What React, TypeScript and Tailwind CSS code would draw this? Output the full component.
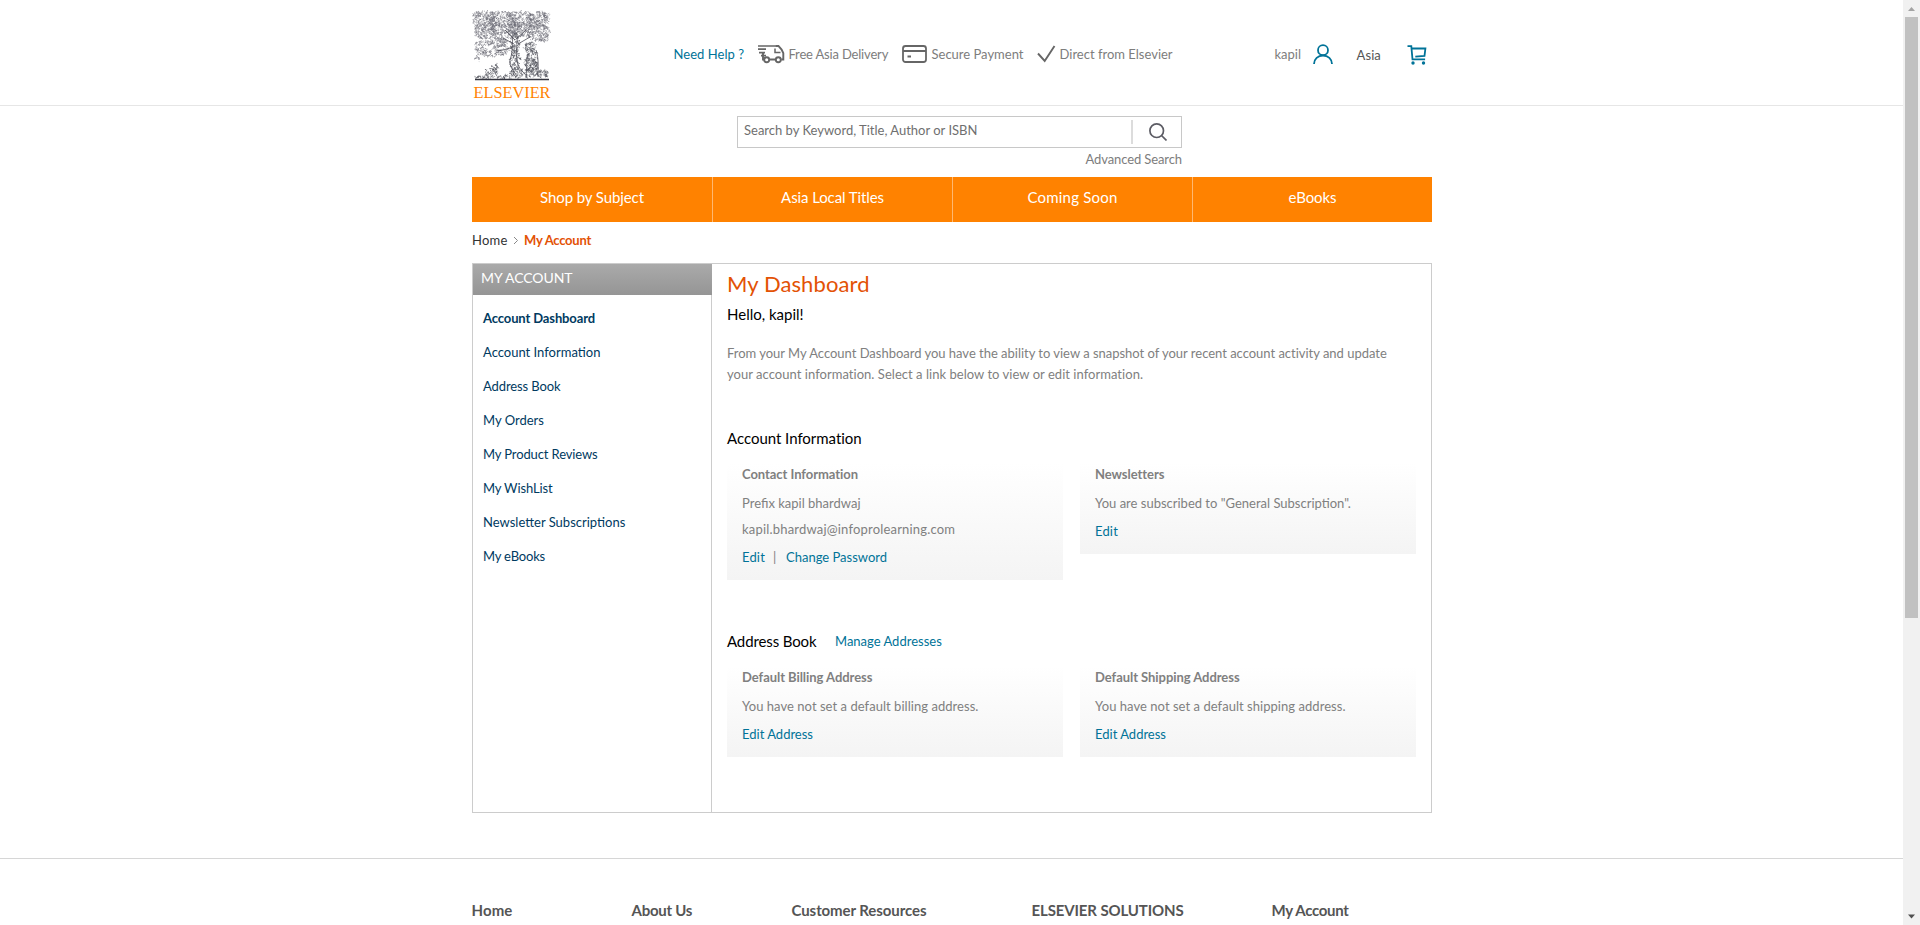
import type { ReactNode } from 'react';

/* ---------- Engraved tree logo ---------- */

type Patch = { cx: number; cy: number; rx: number; ry: number; n: number };

const foliage: Patch[] = [
  { cx: 14, cy: 11, rx: 13, ry: 10, n: 190 },
  { cx: 30, cy: 9, rx: 16, ry: 8, n: 190 },
  { cx: 49, cy: 9, rx: 16, ry: 8, n: 190 },
  { cx: 65, cy: 10, rx: 12, ry: 9, n: 170 },
  { cx: 13, cy: 21, rx: 12, ry: 8, n: 150 },
  { cx: 31, cy: 21, rx: 14, ry: 9, n: 190 },
  { cx: 50, cy: 20, rx: 15, ry: 8, n: 190 },
  { cx: 66, cy: 22, rx: 12, ry: 9, n: 160 },
  { cx: 72, cy: 28, rx: 5, ry: 4, n: 30 },
  { cx: 5, cy: 5, rx: 4, ry: 3, n: 25 },
  { cx: 74, cy: 5, rx: 3, ry: 3, n: 20 },
  { cx: 12, cy: 33, rx: 9, ry: 3, n: 44 },
  { cx: 26, cy: 33, rx: 9, ry: 5, n: 70 },
  { cx: 8, cy: 40, rx: 6, ry: 5, n: 40 },
  { cx: 19, cy: 43, rx: 8, ry: 4, n: 48 },
  { cx: 30, cy: 40, rx: 7, ry: 6, n: 60 },
  { cx: 5, cy: 49, rx: 3, ry: 3, n: 12 },
];

const trunk: Patch[] = [
  { cx: 43, cy: 34, rx: 5, ry: 12, n: 80 },
  { cx: 43, cy: 50, rx: 5, ry: 12, n: 95 },
  { cx: 45, cy: 63, rx: 7, ry: 5, n: 60 },
  { cx: 58, cy: 37, rx: 6, ry: 5, n: 60 },
  { cx: 59, cy: 50, rx: 7, ry: 13, n: 130 },
  { cx: 62, cy: 58, rx: 4, ry: 9, n: 90 },
  { cx: 56, cy: 63, rx: 3, ry: 6, n: 30 },
  { cx: 19, cy: 62, rx: 7, ry: 6, n: 64 },
  { cx: 24, cy: 57, rx: 3, ry: 3, n: 16 },
  { cx: 11, cy: 67, rx: 9, ry: 2, n: 30 },
  { cx: 33, cy: 67, rx: 8, ry: 2, n: 32 },
  { cx: 71, cy: 64, rx: 6, ry: 4, n: 54 },
];

function strokes(patches: Patch[], seed: number, len: number): string {
  let s = seed;
  const rnd = () => {
    s = (s * 16807) % 2147483647;
    return s / 2147483647;
  };
  return patches
    .map((p) =>
      Array.from({ length: p.n }, () => {
        const a = rnd() * Math.PI * 2;
        const r = Math.sqrt(rnd());
        const x = p.cx + Math.cos(a) * p.rx * r;
        const y = p.cy + Math.sin(a) * p.ry * r;
        const q = () => ((rnd() - 0.5) * len).toFixed(1);
        return `M${x.toFixed(1)} ${y.toFixed(1)}q${q()} ${q()} ${q()} ${q()}`;
      }).join('')
    )
    .join('');
}

const foliagePath = strokes(foliage, 4217, 3.6);
const trunkPath = strokes(trunk, 911, 3.2);

function Logo() {
  return (
    <svg width="80" height="94" viewBox="0 0 80 94" fill="none" className="block">
      <path d={foliagePath} stroke="#6a6b74" strokeWidth="0.5" />
      <path d={trunkPath} stroke="#4c4d57" strokeWidth="0.55" />
      <path
        d="M41 24C40 34 41 42 38 50c-1 6 3 10 7 16M45 24c1 10-2 18 0 27 1 6 4 9 8 13M43 30L33 20M44 29l10-9M42 34L31 28M46 34l12-7M40 38c-6 0-10 4-16 2M64 40c3 8 2 18 2 27M56 44c-2 7-1 15-2 23"
        stroke="#4c4d57"
        strokeWidth="0.8"
      />
      <path d="M3 69.6h74" stroke="#34353f" strokeWidth="1.5" />
      <text
        x="1.5"
        y="87.5"
        textLength="77"
        lengthAdjust="spacingAndGlyphs"
        fill="#ff8200"
        className="font-['Liberation_Serif',serif] text-[17px]"
      >
        ELSEVIER
      </text>
    </svg>
  );
}

/* ---------- Icons ---------- */

function TruckIcon() {
  return (
    <svg width="27" height="20" viewBox="0 0 27 20" fill="none" stroke="#666" strokeWidth="1.9" className="block shrink-0">
      <path d="M0 2h18.5M0 5.200h8M1 8.600h6M3 11.600h5" strokeWidth="1.700" />
      <path d="M5 9v6.500h1M11.500 15.500h6" />
      <path d="M17.800 2h2.700c2.300 2 3.800 4.500 4.800 7.200v6.300h-2" />
      <path d="M17 4.500v4h5.500" strokeWidth="1.500" />
      <circle cx="8.700" cy="15.800" r="2.500" />
      <circle cx="20.300" cy="15.800" r="2.500" />
    </svg>
  );
}

function CardIcon() {
  return (
    <svg width="25" height="20" viewBox="0 0 25 20" fill="none" stroke="#666" strokeWidth="1.800" className="block shrink-0">
      <rect x="1" y="2" width="23" height="16" rx="2.500" />
      <path d="M1 7h23M5.500 12.500h3.500" />
    </svg>
  );
}

function CheckIcon() {
  return (
    <svg width="19" height="20" viewBox="0 0 19 20" fill="none" stroke="#666" strokeWidth="1.900" className="block shrink-0">
      <path d="M1 9.500l6.700 7.500L17.500 2" />
    </svg>
  );
}

function UserIcon() {
  return (
    <svg width="20" height="20" viewBox="0 0 20 20" fill="none" stroke="#007398" strokeWidth="1.800" className="block shrink-0">
      <circle cx="10" cy="6.200" r="5" />
      <path d="M1 20c0-5 4-8.500 9-8.500s9 3.500 9 8.500" />
    </svg>
  );
}

function CartIcon() {
  return (
    <svg width="20" height="20" viewBox="0 0 20 20" fill="none" stroke="#007398" strokeWidth="1.800" className="block shrink-0">
      <path d="M.5 1.200h3.800L5.500 14.300h12.600M5 3.500h13.400l-.9 7.300-9.200.9" />
      <circle cx="6" cy="18" r="1.700" fill="#007398" stroke="none" />
      <circle cx="16.500" cy="18" r="1.700" fill="#007398" stroke="none" />
    </svg>
  );
}

function SearchIcon() {
  return (
    <svg width="18" height="18" viewBox="0 0 18 18" fill="none" stroke="#5c5c64" strokeWidth="1.700" className="block">
      <circle cx="7.700" cy="7.700" r="6.800" />
      <path d="M12.500 12.500l5 5" />
    </svg>
  );
}

/* ---------- Page pieces ---------- */

function Header() {
  return (
    <header className="h-[106px] border-b border-[#e6e6e6]">
      <div className="mx-auto flex w-[960px] items-start pt-[10px] leading-5 text-[#7d7d7d]">
        <Logo />
        <div className="ml-[122px] mt-[34px] flex whitespace-nowrap">
          <a className="w-[84px] tracking-[0.05px] text-[#007398]">Need Help ?</a>
          <TruckIcon />
          <span className="ml-1 w-[113px] tracking-[-0.18px]">Free Asia Delivery</span>
          <CardIcon />
          <span className="ml-[5px] w-[105px]">Secure Payment</span>
          <CheckIcon />
          <span className="ml-[4px] w-[215px]">Direct from Elsevier</span>
          <a className="w-[38px]">kapil</a>
          <UserIcon />
          <span className="ml-6 mt-px w-[50px] tracking-[0.1px] text-[#555]">Asia</span>
          <span className="mt-px">
            <CartIcon />
          </span>
        </div>
      </div>
    </header>
  );
}

function SearchBar() {
  return (
    <div className="ml-[265px] mt-[10px] w-[445px]">
      <div className="flex h-8 items-center border border-[#c8c8c8]">
        <div className="mb-1 w-[393px] pl-[6px] leading-5 text-[#6f6f6f]">Search by Keyword, Title, Author or ISBN</div>
        <div className="h-6 w-[2px] bg-[#dcdcdc]" />
        <div className="pl-4">
          <SearchIcon />
        </div>
      </div>
      <div className="mt-px text-right leading-5 tracking-[-0.1px] text-[#7d7d7d]">Advanced Search</div>
    </div>
  );
}

function MainNav() {
  return (
    <nav className="mt-2 grid h-[45px] grid-cols-4 bg-[#ff8200] text-center text-[15px] leading-5 text-white">
      <a className="pt-[10px] tracking-[-0.1px]">Shop by Subject</a>
      <a className="border-l border-[#ffb870] pt-[10px] tracking-[-0.1px]">Asia Local Titles</a>
      <a className="border-l border-[#ffb870] pt-[10px] tracking-[0.2px]">Coming Soon</a>
      <a className="border-l border-[#ffb870] pt-[10px] tracking-[-0.1px]">eBooks</a>
    </nav>
  );
}

function Breadcrumb() {
  return (
    <div className="mt-2 flex leading-5">
      <a className="w-[42px] tracking-[0.2px] text-[#333]">Home</a>
      <svg width="10" height="20" viewBox="0 0 10 20" fill="none" stroke="#888" className="block">
        <path d="M0 7l3.500 3.500L0 14" />
      </svg>
      <span className="font-bold tracking-[-0.24px] text-[#e35205]">My Account</span>
    </div>
  );
}

function Sidebar() {
  return (
    <aside className="w-[239px] border-r border-[#ccc]">
      <h2 className="-mr-px h-[31px] bg-linear-to-b from-[#aaa] to-[#959595] pl-2 pt-1 text-[14px] leading-5 tracking-[-0.08px] text-white">
        MY ACCOUNT
      </h2>
      <ul className="flex flex-col pl-[10px] pt-[6px] leading-[34px] text-[#003a5f]">
        <li className="font-bold tracking-[-0.12px]">Account Dashboard</li>
        <li>Account Information</li>
        <li className="tracking-[-0.1px]">Address Book</li>
        <li>My Orders</li>
        <li className="tracking-[-0.12px]">My Product Reviews</li>
        <li className="tracking-[-0.12px]">My WishList</li>
        <li>Newsletter Subscriptions</li>
        <li className="tracking-[-0.17px]">My eBooks</li>
      </ul>
    </aside>
  );
}

function Card({ title, children }: { title: string; children: ReactNode }) {
  return (
    <section className="w-[336px] bg-linear-to-b from-white to-[#f4f4f4] pb-[13px] pl-[15px] pt-px leading-5">
      <h4 className="mb-[9px] font-bold tracking-[-0.05px]">{title}</h4>
      {children}
    </section>
  );
}

function Dashboard() {
  return (
    <main className="pl-[15px] text-[#808080]">
      <h1 className="mt-[6px] text-[22px] leading-7 tracking-[0.1px] text-[#e35205]">My Dashboard</h1>
      <h3 className="mt-[6px] text-[15px] leading-5 text-black">Hello, kapil!</h3>
      <p className="mt-[19px] whitespace-nowrap leading-[21px]">
        <span className="tracking-[-0.017px]">
          From your My Account Dashboard you have the ability to view a snapshot of your recent account activity and update
        </span>
        <br />
        <span className="tracking-[0.035px]">
          your account information. Select a link below to view or edit information.
        </span>
      </p>

      <h3 className="mt-[43px] text-[15px] leading-5 tracking-[-0.03px] text-black">Account Information</h3>
      <div className="mt-[15px] flex items-start gap-[17px]">
        <Card title="Contact Information">
          <p>Prefix kapil bhardwaj</p>
          <p className="mt-[6px] tracking-[0.19px]">kapil.bhardwaj@infoprolearning.com</p>
          <p className="mt-2 flex">
            <a className="w-[31px] tracking-[0.17px] text-[#007398]">Edit</a>
            <span className="w-[13px]">|</span>
            <a className="text-[#007398]">Change Password</a>
          </p>
        </Card>
        <Card title="Newsletters">
          <p>You are subscribed to "General Subscription".</p>
          <a className="mt-2 block tracking-[0.17px] text-[#007398]">Edit</a>
        </Card>
      </div>

      <div className="mt-[51px] flex items-start leading-5">
        <h3 className="w-[108px] text-[15px] leading-5 tracking-[-0.12px] text-black">Address Book</h3>
        <a className="text-[#007398]">Manage Addresses</a>
      </div>
      <div className="mt-[15px] flex items-start gap-[17px]">
        <Card title="Default Billing Address">
          <p className="tracking-[0.04px]">You have not set a default billing address.</p>
          <a className="mt-2 block text-[#007398]">Edit Address</a>
        </Card>
        <Card title="Default Shipping Address">
          <p className="tracking-[0.04px]">You have not set a default shipping address.</p>
          <a className="mt-2 block text-[#007398]">Edit Address</a>
        </Card>
      </div>
    </main>
  );
}

function Footer() {
  return (
    <footer className="mt-[45px] border-t border-[#d6d6d6]">
      <div className="mx-auto flex w-[960px] whitespace-nowrap pt-[41px] text-[15px] font-bold leading-5 text-[#555]">
        <span className="w-[160px] tracking-[0.1px]">Home</span>
        <span className="w-[160px] tracking-[-0.26px]">About Us</span>
        <span className="w-[240px] tracking-[-0.08px]">Customer Resources</span>
        <span className="w-[240px] tracking-[-0.13px]">ELSEVIER SOLUTIONS</span>
        <span className="tracking-[-0.31px]">My Account</span>
      </div>
    </footer>
  );
}

function Scrollbar() {
  return (
    <div className="flex h-full w-[17px] flex-col items-center bg-[#f1f1f1]">
      <svg width="17" height="17" viewBox="0 0 17 17" className="block shrink-0">
        <path d="M5 11h7L8.500 7z" fill="#a3a3a3" />
      </svg>
      <div className="h-[601px] w-[13px] bg-[#c1c1c1]" />
      <svg width="17" height="17" viewBox="0 0 17 17" className="mt-auto block shrink-0">
        <path d="M5 6.500h7L8.500 10.500z" fill="#505050" />
      </svg>
    </div>
  );
}

export default function App() {
  return (
    <div className="flex h-[925px] w-[1920px] overflow-hidden bg-white font-['Lato',sans-serif] text-[13px]">
      <div className="w-[1903px]">
        <Header />
        <div className="ml-[472px] w-[960px]">
          <SearchBar />
          <MainNav />
          <Breadcrumb />
          <div className="mt-[13px] flex h-[550px] border border-[#ccc]">
            <Sidebar />
            <Dashboard />
          </div>
        </div>
        <Footer />
      </div>
      <Scrollbar />
    </div>
  );
}
